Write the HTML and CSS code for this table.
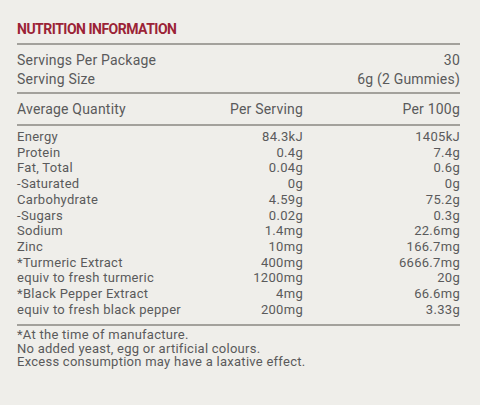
FILE: index.html
```html
<!DOCTYPE html>
<html>
<head>
<meta charset="utf-8">
<link rel="stylesheet" href="styles.css">
</head>
<body>
<div class="panel">
  <h1 class="title">NUTRITION INFORMATION</h1>
  <div class="section servings">
    <div class="row"><span class="label">Servings Per Package</span><span class="val100">30</span></div>
    <div class="row"><span class="label">Serving Size</span><span class="val100">6g (2 Gummies)</span></div>
  </div>
  <div class="section head">
    <div class="row"><span class="label">Average Quantity</span><span class="valserv">Per Serving</span><span class="val100">Per 100g</span></div>
  </div>
  <div class="section body">
    <div class="row"><span class="label">Energy</span><span class="valserv">84.3kJ</span><span class="val100">1405kJ</span></div>
    <div class="row"><span class="label">Protein</span><span class="valserv">0.4g</span><span class="val100">7.4g</span></div>
    <div class="row"><span class="label">Fat, Total</span><span class="valserv">0.04g</span><span class="val100">0.6g</span></div>
    <div class="row"><span class="label">-Saturated</span><span class="valserv">0g</span><span class="val100">0g</span></div>
    <div class="row"><span class="label">Carbohydrate</span><span class="valserv">4.59g</span><span class="val100">75.2g</span></div>
    <div class="row"><span class="label">-Sugars</span><span class="valserv">0.02g</span><span class="val100">0.3g</span></div>
    <div class="row"><span class="label">Sodium</span><span class="valserv">1.4mg</span><span class="val100">22.6mg</span></div>
    <div class="row"><span class="label">Zinc</span><span class="valserv">10mg</span><span class="val100">166.7mg</span></div>
    <div class="row"><span class="label">*Turmeric Extract</span><span class="valserv">400mg</span><span class="val100">6666.7mg</span></div>
    <div class="row"><span class="label">equiv to fresh turmeric</span><span class="valserv">1200mg</span><span class="val100">20g</span></div>
    <div class="row"><span class="label">*Black Pepper Extract</span><span class="valserv">4mg</span><span class="val100">66.6mg</span></div>
    <div class="row"><span class="label">equiv to fresh black pepper</span><span class="valserv">200mg</span><span class="val100">3.33g</span></div>
  </div>
  <div class="notes">
    <p>*At the time of manufacture.</p>
    <p>No added yeast, egg or artificial colours.</p>
    <p>Excess consumption may have a laxative effect.</p>
  </div>
</div>
</body>
</html>
```
FILE: styles.css
```css
html, body {
  margin: 0;
  padding: 0;
  background: #efeeea;
}
body {
  font-family: Roboto, "Liberation Sans", sans-serif;
  color: #5a5a5b;
  font-size: 13px;
  letter-spacing: 0.3px;
}
.panel {
  width: 443px;
  padding: 21px 0 0 17px;
}
.title {
  margin: 0;
  font-size: 14px;
  font-weight: 700;
  color: #9b2336;
  line-height: 16px;
  letter-spacing: -0.5px;
  padding-bottom: 6px;
  border-bottom: 2px solid #a3a19c;
}
.section {
  border-bottom: 2px solid #a3a19c;
}
.servings {
  padding: 6px 0 3px;
  font-size: 14px;
  letter-spacing: 0.2px;
}
.servings .row {
  line-height: 19px;
}
.head {
  padding: 6px 0 5px;
  font-size: 14px;
  letter-spacing: 0.2px;
}
.head .row {
  line-height: 19px;
}
.body {
  padding: 3px 0 7px;
}
.body .row {
  line-height: 15.7px;
}
.row {
  display: flex;
}
.label {
  flex: 1;
}
.valserv {
  width: 100px;
  text-align: right;
}
.val100 {
  width: 157px;
  text-align: right;
}
.notes {
  padding-top: 2px;
  line-height: 13.5px;
  letter-spacing: 0.26px;
}
.notes p {
  margin: 0;
}
```
